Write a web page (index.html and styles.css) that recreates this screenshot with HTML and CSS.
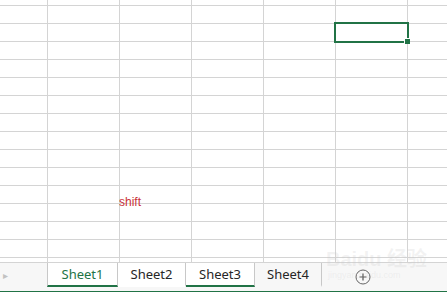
FILE: index.html
```html
<!DOCTYPE html>
<html lang="zh">
<head>
    <meta charset="UTF-8">
    <title>Sheet1</title>
    <link rel="stylesheet" href="styles.css">
</head>
<body>
    <!-- Zone des cellules -->
    <div class="sheet">
        <div class="selection"><span class="handle"></span></div>
        <div class="note">shift</div>
        <div class="watermark">
            <span class="wm-big">Baidu 经验</span>
            <span class="wm-small">jingyan.baidu.com</span>
        </div>
    </div>

    <!-- Barre des onglets -->
    <div class="tabbar">
        <div class="nav">&#9656;</div>
        <div class="tab active">Sheet1</div>
        <div class="tab">Sheet2</div>
        <div class="tab picked">Sheet3</div>
        <div class="tab last">Sheet4</div>
        <div class="add">
            <svg width="16" height="16" viewBox="0 0 16 16">
                <circle cx="8" cy="8" r="7" fill="none" stroke="#666" stroke-width="1"/>
                <path d="M8 4.5v7M4.5 8h7" stroke="#555" stroke-width="1.2"/>
            </svg>
        </div>
    </div>
    <div class="status"></div>
</body>
</html>
```

FILE: styles.css
```css
body {
    margin: 0;
    width: 447px;
    height: 292px;
    overflow: hidden;
    background-color: #fff;
    font-family: "Noto Sans", Arial, sans-serif;
}
.sheet {
    position: relative;
    height: 262px;
    background-image:
        linear-gradient(to right, #d4d4d4 1px, transparent 1px),
        linear-gradient(to bottom, #d4d4d4 1px, transparent 1px);
    background-size: 72px 100%, 100% 18px;
    background-position: 47px 0, 0 5px;
}
.selection {
    position: absolute;
    left: 334px;
    top: 22px;
    width: 75px;
    height: 21px;
    box-sizing: border-box;
    border: 2px solid #217346;
}
.handle {
    position: absolute;
    right: -3px;
    bottom: -3px;
    width: 5px;
    height: 5px;
    background-color: #217346;
    border-top: 1px solid #fff;
    border-left: 1px solid #fff;
}
.note {
    position: absolute;
    left: 119px;
    top: 195px;
    font-family: "Liberation Sans", Arial, sans-serif;
    font-size: 12px;
    line-height: 14px;
    color: #c9323b;
}
.watermark {
    position: absolute;
    left: 326px;
    top: 248px;
    display: flex;
    flex-direction: column;
    color: rgba(200, 200, 200, 0.22);
    pointer-events: none;
}
.wm-big {
    font-family: "Liberation Sans", "Noto Sans CJK SC", sans-serif;
    font-size: 20px;
    font-weight: bold;
    line-height: 22px;
}
.wm-small {
    font-family: "Liberation Sans", sans-serif;
    font-size: 9px;
    line-height: 10px;
    padding-left: 2px;
}
.tabbar {
    display: flex;
    height: 26px;
    border-top: 1px solid #d4d4d4;
    background-color: #f7f7f7;
    padding-bottom: 2px;
}
.nav {
    width: 47px;
    padding-left: 3px;
    box-sizing: border-box;
    font-size: 10px;
    line-height: 24px;
    color: #c2c2c2;
}
.tab {
    width: 68px;
    height: 24px;
    box-sizing: border-box;
    border-right: 1px solid #c8c8c8;
    border-bottom: 2px solid transparent;
    background-color: #fff;
    text-align: center;
    font-size: 13px;
    line-height: 22px;
    color: #262626;
}
.tab.active {
    width: 71px;
    border-left: 1px solid #c8c8c8;
    border-bottom-color: #217346;
    color: #217346;
}
.tab.picked {
    width: 69px;
    border-bottom-color: #217346;
}
.tab.last {
    width: 67px;
    background-color: transparent;
}
.add {
    margin-left: 33px;
    padding-top: 5px;
}
.status {
    height: 3px;
    background-color: #217346;
}
```
